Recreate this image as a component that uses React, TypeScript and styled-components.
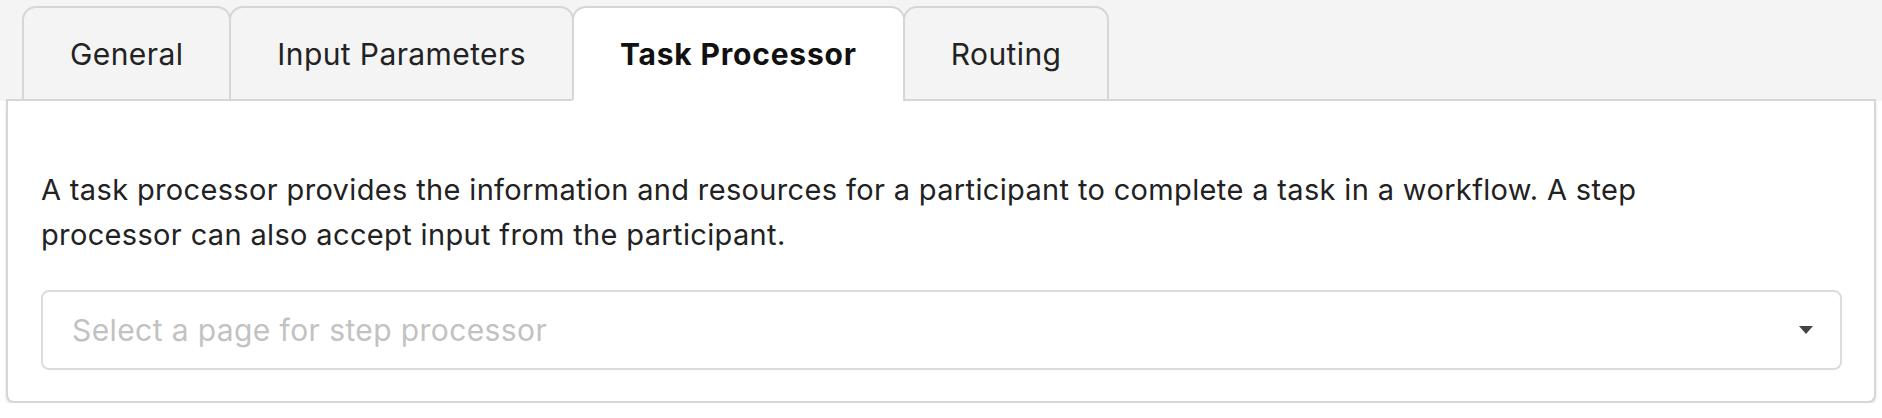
import React from "react";
import styled, { createGlobalStyle } from "styled-components";

const Global = createGlobalStyle`
  html, body { margin: 0; padding: 0; background: #ffffff; }
  body { font-family: Inter, "Noto Sans", "Liberation Sans", sans-serif; color: #222; }
`;

const Page = styled.div`
  width: 1882px;
`;

const Header = styled.div`
  background: #f4f4f4;
  padding: 6px 6px 0 6px;
`;

const TabRow = styled.div`
  display: flex;
  align-items: stretch;
  height: 95px;
`;

const Edge = styled.div<{ $grow?: boolean }>`
  width: 16px;
  flex: ${(p) => (p.$grow ? "1 1 auto" : "0 0 16px")};
  border-bottom: 2px solid #d6d6d6;
`;

const Tab = styled.button<{ $active?: boolean }>`
  all: unset;
  box-sizing: border-box;
  display: flex;
  align-items: center;
  justify-content: center;
  padding: 0 46px;
  font-family: Inter, "Noto Sans", "Liberation Sans", sans-serif;
  font-size: 30px;
  letter-spacing: ${(p) => (p.$active ? "0.8px" : "0.4px")};
  font-weight: ${(p) => (p.$active ? 700 : 400)};
  color: ${(p) => (p.$active ? "#111" : "#222")};
  background: ${(p) => (p.$active ? "#ffffff" : "#f4f4f4")};
  border: 2px solid #d6d6d6;
  border-bottom: 2px solid ${(p) => (p.$active ? "#ffffff" : "#d6d6d6")};
  border-radius: 14px 14px 0 0;
  margin-left: -2px;
  &:first-of-type { margin-left: 0; }
  cursor: pointer;
`;

const Panel = styled.div`
  margin: 0 6px;
  background: #fff;
  border: 2px solid #d6d6d6;
  border-top: none;
  border-radius: 0 0 8px 8px;
  box-shadow: 0 2px 3px rgba(0, 0, 0, 0.12);
  padding: 66px 32px 31px 33px;
`;

const Description = styled.p`
  margin: 0 0 33px 0;
  font-size: 29px;
  letter-spacing: 0.35px;
  line-height: 45px;
  color: #222;
  max-width: 1720px;
`;

const Select = styled.div`
  box-sizing: border-box;
  height: 80px;
  display: flex;
  align-items: center;
  justify-content: space-between;
  border: 2px solid #dcdcdc;
  border-radius: 8px;
  padding: 0 27px 0 29px;
  background: #fff;
`;

const Placeholder = styled.span`
  font-size: 30px;
  letter-spacing: 0.4px;
  color: #c2c2c2;
`;

const Caret = styled.svg`
  width: 14px;
  height: 8px;
  display: block;
`;

export default function App() {
  const tabs = ["General", "Input Parameters", "Task Processor", "Routing"];
  const active = "Task Processor";
  return (
    <Page>
      <Global />
      <Header>
        <TabRow>
          <Edge />
          {tabs.map((t) => (
            <Tab key={t} $active={t === active}>
              {t}
            </Tab>
          ))}
          <Edge $grow />
        </TabRow>
      </Header>
      <Panel>
        <Description>
          A task processor provides the information and resources for a participant to complete a task in a workflow. A step processor can also accept input from the participant.
        </Description>
        <Select>
          <Placeholder>Select a page for step processor</Placeholder>
          <Caret viewBox="0 0 14 8">
            <path d="M0 0 L14 0 L7 8 Z" fill="#444" />
          </Caret>
        </Select>
      </Panel>
    </Page>
  );
}
